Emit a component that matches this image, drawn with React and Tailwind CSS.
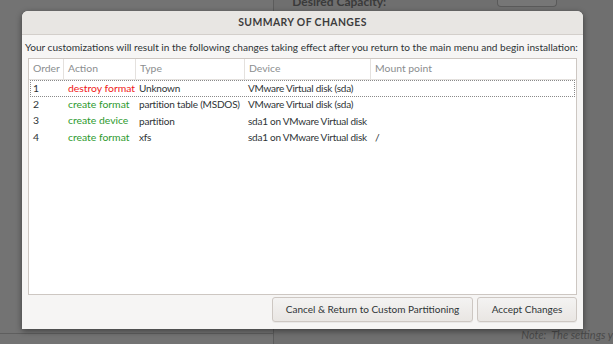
import React from "react";

const columns = [
  { key: "order", label: "Order", width: "w-[35px]" },
  { key: "action", label: "Action", width: "w-[72px]" },
  { key: "type", label: "Type", width: "w-[109px]" },
  { key: "device", label: "Device", width: "w-[126px]" },
  { key: "mount", label: "Mount point", width: "flex-1" },
];

const rows = [
  { order: "1", action: "destroy format", destroy: true, type: "Unknown", device: "VMware Virtual disk (sda)", mount: "" },
  { order: "2", action: "create format", type: "partition table (MSDOS)", device: "VMware Virtual disk (sda)", mount: "" },
  { order: "3", action: "create device", type: "partition", device: "sda1 on VMware Virtual disk", mount: "" },
  { order: "4", action: "create format", type: "xfs", device: "sda1 on VMware Virtual disk", mount: "/" },
];

export default function App() {
  return (
    <div
      className="relative h-[344px] w-[613px] overflow-hidden bg-[#6f6f6f] text-[10.4px] text-[#2e3436]"
      style={{ fontFamily: "Lato, 'Noto Sans', sans-serif" }}
    >
      {/* dimmed page behind the dialog */}
      <div className="flex h-full">
        <div className="flex w-[276px] flex-col border-r border-[#5c5c5c] bg-[#737373]">
          <div className="flex-1" />
          <div className="h-[11px] border-t border-[#5e5e5e]" />
        </div>
        <div className="flex flex-1 flex-col bg-[#6f6f6f]">
          <div className="flex h-[8px] items-start justify-between pl-[18px] pr-[56px]">
            <span className="-mt-[7px] text-[12px] font-bold text-[#3a3a3a]">Desired Capacity:</span>
            <div className="h-[7px] w-[60px] rounded-b border border-t-0 border-[#5a5a5a] bg-[#767676]" />
          </div>
          <div className="flex-1" />
          <div className="pb-[1px] pl-[247px] text-[11px] italic text-[#4a4a4a] whitespace-nowrap">Note:&nbsp; The settings y</div>
        </div>
      </div>

      {/* dialog */}
      <div className="absolute left-[22px] top-[11px] flex h-[318px] w-[561px] flex-col rounded-t-[6px] bg-[#f6f5f4] shadow-[0_2px_6px_rgba(0,0,0,0.45)]">
        <div className="flex h-[24px] items-center justify-center rounded-t-[6px] border-b border-[#d3cfcb] bg-[#e8e6e3]">
          <span className="text-[10.4px] font-bold tracking-[0.4px] text-[#3d3d3d]">SUMMARY OF CHANGES</span>
        </div>
        <div className="px-[3px] pt-[5px] pb-[3px] whitespace-nowrap text-[10.1px] text-[#2e3436]">
          Your customizations will result in the following changes taking effect after you return to the main menu and begin installation:
        </div>
        <div className="mx-[6px] flex h-[237px] flex-col border border-[#cdc7c2] bg-white">
          <div className="flex h-[21px] border-b border-[#e4e1de]">
            {columns.map((c, i) => (
              <div
                key={c.key}
                className={`${c.width} flex items-center pl-[4px] text-[#8b8e8f] ${i < columns.length - 1 ? "border-r border-[#e4e1de]" : ""}`}
              >
                {c.label}
              </div>
            ))}
          </div>
          {rows.map((r, idx) => (
            <div
              key={r.order}
              className={`mx-[1px] flex h-[16.4px] items-center ${idx === 0 ? "outline-1 outline-dotted outline-[#8a8a8a] -outline-offset-1" : ""}`}
            >
              <div className="w-[34px] pl-[3px]">{r.order}</div>
              <div className={`w-[72px] pl-[4px] whitespace-nowrap ${r.destroy ? "text-[#f01818]" : "text-[#2e9a2e]"}`}>{r.action}</div>
              <div className="w-[109px] pl-[3px] whitespace-nowrap text-[10px] tracking-[-0.2px]">{r.type}</div>
              <div className="w-[126px] pl-[3px] whitespace-nowrap text-[10px] tracking-[-0.25px]">{r.device}</div>
              <div className="flex-1 pl-[4px]">{r.mount}</div>
            </div>
          ))}
        </div>
        <div className="flex justify-end gap-[4px] px-[6px] pt-[2px]">
          <button className="h-[25px] w-[201px] rounded-[3px] border border-[#cdc7c2] bg-gradient-to-b from-[#f4f3f2] to-[#e9e6e3] text-[10px] text-[#2e3436] shadow-[0_1px_0_rgba(0,0,0,0.05)]">
            Cancel &amp; Return to Custom Partitioning
          </button>
          <button className="h-[25px] w-[100px] rounded-[3px] border border-[#cdc7c2] bg-gradient-to-b from-[#f4f3f2] to-[#e9e6e3] text-[10px] text-[#2e3436] shadow-[0_1px_0_rgba(0,0,0,0.05)]">
            Accept Changes
          </button>
        </div>
      </div>
    </div>
  );
}
